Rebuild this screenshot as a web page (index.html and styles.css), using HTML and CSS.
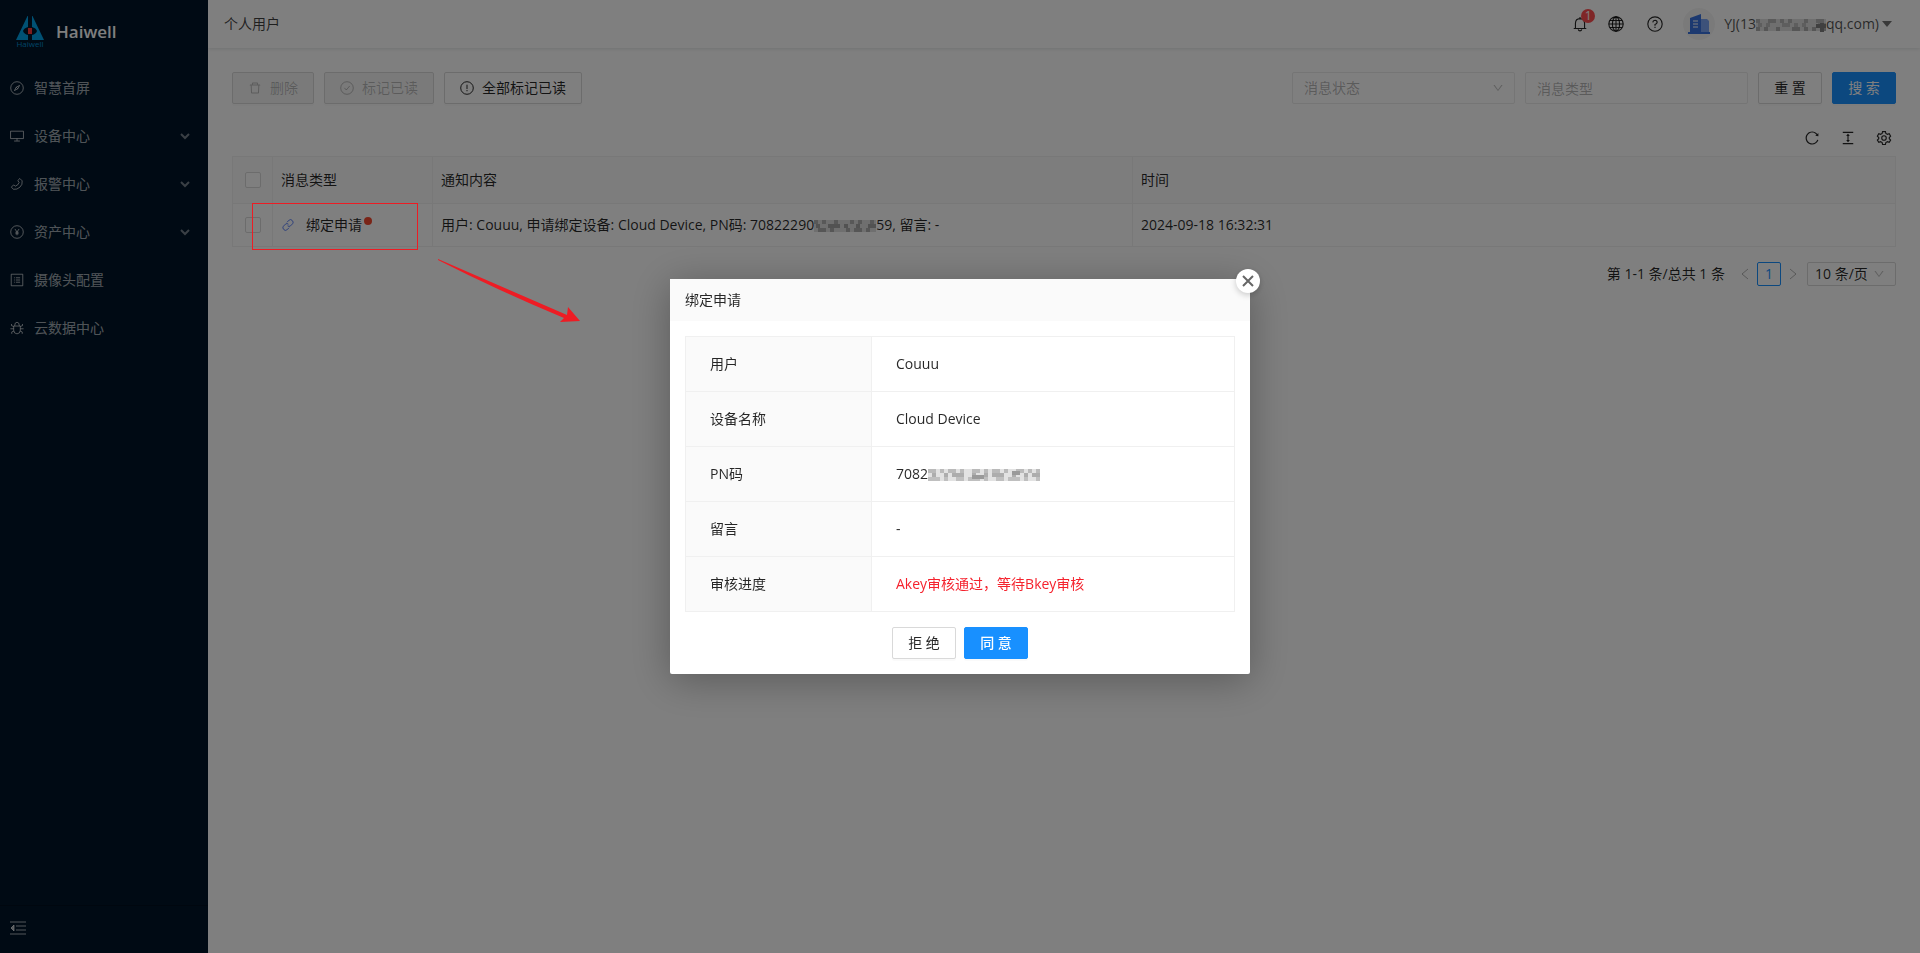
FILE: index.html
```
<!DOCTYPE html>
<html lang="zh-CN">
<head>
<meta charset="utf-8">
<title>Haiwell</title>
<link rel="stylesheet" href="styles.css">
</head>
<body>
<div class="app">
  <aside class="sider">
    <a class="brand" href="#">
      <svg class="brand-logo" viewBox="0 0 28 32" aria-hidden="true">
        <path d="M11.500 0H12V11Q8 12 7 15Q8 18 12 19V24H0Z" fill="#00a2e8"/>
        <path d="M16 0H16.500L28 24H16V19Q20 18 21 15Q20 12 16 11Z" fill="#00a2e8"/>
        <rect x="12" y="12" width="4" height="6" fill="#ff3b3b"/>
        <text class="brand-caption" x="14" y="31" text-anchor="middle" fill="#0088cc">Haiwell</text>
      </svg>
      <span>Haiwell</span>
    </a>
    <nav class="menu">
      <a class="menu-item" href="#"><svg class="icon line" viewBox="0 0 1024 1024"><circle cx="512" cy="512" r="460"/><path d="M700 324 570 570 324 700 454 454ZM454 454 570 570"/></svg><span>智慧首屏</span></a>
      <a class="menu-item" href="#"><svg class="icon line" viewBox="0 0 1024 1024"><path d="M40 160H984V700H40ZM512 700V860M300 880H724"/></svg><span>设备中心</span><svg class="fold" viewBox="0 0 10 10"><path d="M1 3 5 7 9 3"/></svg></a>
      <a class="menu-item" href="#"><svg class="icon line" viewBox="0 0 1024 1024"><path d="M720 110 890 280Q930 560 730 740Q520 940 250 900L100 740 260 580 400 670Q600 600 670 400L570 260Z"/></svg><span>报警中心</span><svg class="fold" viewBox="0 0 10 10"><path d="M1 3 5 7 9 3"/></svg></a>
      <a class="menu-item" href="#"><svg class="icon line" viewBox="0 0 1024 1024"><circle cx="512" cy="512" r="460"/><path d="M360 290 512 510 664 290M512 510V750M390 530H634M390 640H634"/></svg><span>资产中心</span><svg class="fold" viewBox="0 0 10 10"><path d="M1 3 5 7 9 3"/></svg></a>
      <a class="menu-item" href="#"><svg class="icon line" viewBox="0 0 1024 1024"><path d="M90 90H934V934H90ZM290 350H350M290 512H350M290 674H350M430 350H740M430 512H740M430 674H740"/></svg><span>摄像头配置</span></a>
      <a class="menu-item" href="#"><svg class="icon line" viewBox="0 0 1024 1024"><path d="M270 370H754V680Q740 930 512 940Q284 930 270 680ZM340 360Q340 90 512 90Q684 90 684 360M270 400 110 340V220M754 400 914 340V220M270 570H30M754 570H994M290 730 130 800V940M734 730 894 800V940"/></svg><span>云数据中心</span></a>
    </nav>
    <button class="collapse" type="button" aria-label="收起菜单"><svg viewBox="0 0 16 14"><path d="M0 1H16M6 5H16M6 9H16M0 13H16"/><path class="solid" d="M4 4V10L1 7Z"/></svg></button>
  </aside>

  <div class="main">
    <header class="topbar">
      <span class="topbar-title">个人用户</span>
      <div class="topbar-tools">
        <button class="tool bell" type="button" aria-label="通知"><svg class="icon-16 line" viewBox="0 0 1024 1024"><path d="M220 800V460Q230 180 512 170Q794 180 804 460V800M110 800H914M512 170V70M400 850Q420 950 512 950Q604 950 624 850"/></svg><span class="badge">1</span></button>
        <button class="tool globe" type="button" aria-label="语言"><svg class="icon-16 line" viewBox="0 0 1024 1024"><circle cx="512" cy="512" r="460"/><ellipse cx="512" cy="512" rx="230" ry="460"/><path d="M52 512H972M512 52V972M120 290H904M120 734H904"/></svg></button>
        <button class="tool help" type="button" aria-label="帮助"><svg class="icon-16 line" viewBox="0 0 1024 1024"><circle cx="512" cy="512" r="460"/><path d="M370 410Q380 280 512 275Q650 285 650 410Q640 500 512 540V620M512 690V760"/></svg></button>
        <button class="user" type="button">
          <span class="avatar"><svg viewBox="0 0 22 20" aria-hidden="true"><path d="M2 4 13 0V19H2Z" fill="#3873e0"/><path d="M13 5H19L21 7V19H13Z" fill="#7ba5f5"/><path d="M0 18H22V20H0Z" fill="#3873e0"/><path d="M5 7H10M5 10H10M5 13H10" stroke="#fff"/></svg></span>
          <span class="user-name">YJ(13<svg class="mosaic" width="70" height="14" viewBox="0 0 70 14" role="img" aria-label="已隐藏"><path d="M0 7H70" stroke="#dedede" stroke-width="12"/><path d="M0 3H70" stroke="#b4b4b4" stroke-width="4" stroke-dasharray="4 8 8 4 4 4 4 12"/><path d="M2 7H70" stroke="#bdbdbd" stroke-width="4" stroke-dasharray="4 4 4 12 8 4"/><path d="M0 11H70" stroke="#adadad" stroke-width="4" stroke-dasharray="4 4 4 8 4 12 8 4"/><path d="M60 8H70M66 5V14" stroke="#808080" stroke-width="4"/></svg>qq.com)</span>
          <svg class="caret" viewBox="0 0 10 6"><path d="M0 0H10L5 6Z"/></svg>
        </button>
      </div>
    </header>

    <main class="content">
      <div class="filters">
        <div class="group">
          <button class="btn" type="button" disabled><svg class="icon" viewBox="0 0 1024 1024"><path d="M360 184h304v72h72v-80c0-35.300-28.700-64-64-64H352c-35.300 0-64 28.700-64 64v80h72v-72zm504 72H160c-17.700 0-32 14.300-32 32v32c0 4.400 3.600 8 8 8h60.400l24.700 523c1.600 34.100 29.800 61 63.900 61h454c34.200 0 62.300-26.800 63.900-61l24.700-523H888c4.400 0 8-3.600 8-8v-32c0-17.700-14.300-32-32-32zM731.300 840H292.700l-24.200-512h487l-24.200 512z"/></svg>删除</button>
          <button class="btn" type="button" disabled><svg class="icon line" viewBox="0 0 1024 1024"><circle cx="512" cy="512" r="460"/><path d="M320 500 460 660 710 360"/></svg>标记已读</button>
          <button class="btn" type="button"><svg class="icon line" viewBox="0 0 1024 1024"><circle cx="512" cy="512" r="460"/><path d="M512 270V590M512 660V750"/></svg>全部标记已读</button>
        </div>
        <div class="group">
          <label class="field"><select class="control placeholder" aria-label="消息状态"><option>消息状态</option></select><svg class="arrow" viewBox="0 0 1024 1024"><path d="M884 256h-75c-5.100 0-9.900 2.500-12.900 6.600L512 654.200 227.900 262.600c-3-4.100-7.800-6.600-12.900-6.600h-75c-6.500 0-10.300 7.400-6.500 12.700l352.600 486.100c12.800 17.600 39 17.600 51.700 0l352.600-486.100c3.900-5.300.1-12.700-6.400-12.700z"/></svg></label>
          <label class="field"><input class="control" type="text" placeholder="消息类型" aria-label="消息类型"></label>
          <button class="btn" type="button">重 置</button>
          <button class="btn primary" type="button">搜 索</button>
        </div>
      </div>

      <div class="table-tools">
        <button class="tool" type="button" aria-label="刷新"><svg class="icon-16" viewBox="0 0 1024 1024"><path d="M909.100 209.300l-56.400 44.100C775.800 155.100 656.200 92 521.900 92 290 92 102.300 279.500 102 511.500 101.700 743.700 289.800 932 521.900 932c181.300 0 335.800-115 394.600-276.100 1.500-4.200-.7-8.900-4.900-10.300l-56.700-19.500a8 8 0 00-10.100 4.800c-1.800 5-3.800 10-5.900 14.900-17.300 41-42.100 77.800-73.700 109.400A344.770 344.770 0 01655.900 829c-42.300 17.900-87.400 27-133.800 27-46.500 0-91.500-9.100-133.800-27A341.500 341.500 0 01279 755.200a342.160 342.160 0 01-73.700-109.400c-17.900-42.400-27-87.400-27-133.900s9.100-91.500 27-133.900c17.300-41 42.100-77.800 73.700-109.400 31.600-31.600 68.400-56.400 109.300-73.800 42.300-17.900 87.400-27 133.800-27 46.500 0 91.500 9.100 133.800 27a341.500 341.500 0 01109.300 73.800c9.900 9.900 19.200 20.400 27.800 31.400l-60.200 47a8 8 0 003 14.100l175.600 43c5 1.200 9.900-2.600 9.900-7.700l.8-180.900c-.1-6.600-7.800-10.300-13-6.200z"/></svg></button>
        <button class="tool" type="button" aria-label="密度"><svg class="icon-16" viewBox="0 0 1024 1024"><path d="M840 836H184c-4.400 0-8 3.600-8 8v60c0 4.400 3.600 8 8 8h656c4.400 0 8-3.600 8-8v-60c0-4.400-3.600-8-8-8zm0-724H184c-4.400 0-8 3.600-8 8v60c0 4.400 3.600 8 8 8h656c4.400 0 8-3.600 8-8v-60c0-4.400-3.600-8-8-8zM610.800 378c6 0 9.400-7 5.700-11.700L515.700 238.700a7.140 7.140 0 00-11.300 0L403.600 366.300a7.230 7.230 0 005.700 11.700H476v268h-62.800c-6 0-9.400 7-5.700 11.700l100.800 127.500c2.900 3.700 8.500 3.700 11.300 0l100.800-127.500c3.700-4.700.4-11.700-5.700-11.700H548V378h62.800z"/></svg></button>
        <button class="tool" type="button" aria-label="列设置"><svg class="icon-16 line" viewBox="0 0 1024 1024"><path d="M420 100H604L630 220 730 278 846 240 936 398 850 480V560L936 640 846 790 730 750 630 806 604 926H420L394 806 294 750 178 790 88 640 174 560V480L88 398 178 240 294 278 394 220Z"/><circle cx="512" cy="512" r="145"/></svg></button>
      </div>

      <table class="grid">
        <colgroup><col class="col-check"><col class="col-type"><col class="col-text"><col></colgroup>
        <thead><tr><th class="check"><input type="checkbox" aria-label="全选"></th><th>消息类型</th><th>通知内容</th><th>时间</th></tr></thead>
        <tbody><tr>
          <td class="check"><input type="checkbox" aria-label="选择此行"></td>
          <td><a class="message" href="#"><svg class="icon link line" viewBox="0 0 1024 1024"><path d="M440 310 600 150Q710 60 820 180Q950 300 850 420L690 580Q590 660 480 570M584 714 424 874Q314 964 204 844Q74 724 174 604L334 444Q434 364 544 454"/></svg><span class="message-name">绑定申请</span><i class="dot"></i></a></td>
          <td>用户: Couuu, 申请绑定设备: Cloud Device, PN码: 70822290<svg class="mosaic" width="62" height="14" viewBox="0 0 62 14" role="img" aria-label="已隐藏"><path d="M0 7H62" stroke="#dedede" stroke-width="12"/><path d="M0 3H62" stroke="#b0b0b0" stroke-width="4" stroke-dasharray="4 4 4 8 4 12"/><path d="M2 7H62" stroke="#a4a4a4" stroke-width="4" stroke-dasharray="4 8 12 4 4 8"/><path d="M4 11H62" stroke="#adadad" stroke-width="4" stroke-dasharray="8 4 4 12 4 4"/></svg>59, 留言: -</td>
          <td>2024-09-18 16:32:31</td>
        </tr></tbody>
      </table>

      <div class="pager">
        <span class="total">第 1-1 条/总共 1 条</span>
        <button class="step" type="button" disabled aria-label="上一页"><svg viewBox="0 0 10 12"><path d="M8 1 2 6 8 11"/></svg></button>
        <button class="page" type="button">1</button>
        <button class="step" type="button" disabled aria-label="下一页"><svg viewBox="0 0 10 12"><path d="M2 1 8 6 2 11"/></svg></button>
        <label class="size"><select class="control" aria-label="每页条数"><option>10 条/页</option></select><svg class="arrow" viewBox="0 0 1024 1024"><path d="M884 256h-75c-5.100 0-9.900 2.500-12.900 6.600L512 654.200 227.900 262.600c-3-4.100-7.800-6.600-12.900-6.600h-75c-6.500 0-10.300 7.400-6.500 12.700l352.600 486.100c12.800 17.600 39 17.600 51.700 0l352.600-486.100c3.900-5.300.1-12.700-6.400-12.700z"/></svg></label>
      </div>
    </main>
  </div>
</div>

<div class="mask">
  <section class="modal" role="dialog" aria-labelledby="modal-title">
    <h2 class="modal-title" id="modal-title">绑定申请</h2>
    <button class="close" type="button" aria-label="关闭"><svg viewBox="0 0 12 12"><path d="M1 1 11 11M11 1 1 11"/></svg></button>
    <div class="modal-body">
      <table class="details">
        <tbody>
          <tr><th scope="row">用户</th><td>Couuu</td></tr>
          <tr><th scope="row">设备名称</th><td>Cloud Device</td></tr>
          <tr><th scope="row">PN码</th><td>7082<svg class="mosaic" width="112" height="14" viewBox="0 0 112 14" role="img" aria-label="已隐藏"><path d="M0 7H112" stroke="#e2e2e2" stroke-width="12"/><path d="M0 3H112" stroke="#bababa" stroke-width="4" stroke-dasharray="8 4 4 4 8 4 4 8"/><path d="M4 7H112" stroke="#adadad" stroke-width="4" stroke-dasharray="4 8 4 4 12 8"/><path d="M0 11H112" stroke="#bfbfbf" stroke-width="4" stroke-dasharray="12 4 4 8 8 4"/><path d="M44 9H56M84 5H92" stroke="#9a9a9a" stroke-width="4"/></svg></td></tr>
          <tr><th scope="row">留言</th><td>-</td></tr>
          <tr><th scope="row">审核进度</th><td class="alert">Akey审核通过，等待Bkey审核</td></tr>
        </tbody>
      </table>
      <div class="actions">
        <button class="btn" type="button">拒 绝</button>
        <button class="btn primary" type="button">同 意</button>
      </div>
    </div>
  </section>
</div>

<svg class="callout" width="330" height="122" viewBox="0 0 330 122" aria-hidden="true">
  <rect x="0.500" y="0.500" width="165" height="46" fill="none" stroke="#ed1c24"/>
  <path d="M186 56 315 112 316 104 328 118 308 119 312 115Q245 87 186 57Z" fill="#ed1c24"/>
</svg>
</body>
</html>
```
FILE: styles.css
```
* { box-sizing: border-box; }

body {
  margin: 0;
  color: rgba(0, 0, 0, .85);
  font: 14px/22px "Open Sans", "Noto Sans CJK SC", sans-serif;
}

button, input, select { margin: 0; color: inherit; font: inherit; }
button { padding: 0; border: 0; background: none; }
a { color: inherit; text-decoration: none; }
svg { display: block; flex: none; fill: currentColor; }

.line { fill: none; stroke: currentColor; stroke-width: 72; }
.icon { width: 14px; height: 14px; }
.icon-16 { width: 16px; height: 16px; }
.mosaic { display: inline-block; vertical-align: -3px; }

.app { display: flex; min-height: 100vh; background: #fff; }

/* Sidebar */
.sider {
  display: flex;
  flex: none;
  flex-direction: column;
  width: 208px;
  background: #001529;
  color: rgba(255, 255, 255, .65);
}
.brand {
  display: flex;
  align-items: center;
  gap: 12px;
  padding: 16px 16px 12px;
  color: #fff;
  font-size: 17px;
  font-weight: 600;
  line-height: 32px;
}
.brand-logo { width: 28px; height: 32px; }
.brand-caption { font-size: 8px; font-weight: 400; }
.menu { display: flex; flex: 1; flex-direction: column; gap: 8px; padding: 8px 0; }
.menu-item { display: flex; align-items: center; gap: 10px; height: 40px; padding: 0 18px 0 10px; }
.fold { width: 10px; height: 10px; margin-left: auto; fill: none; stroke: currentColor; stroke-width: 2; opacity: .7; }
.collapse { display: flex; align-items: center; height: 48px; padding: 0 10px 4px; border-top: 1px solid rgba(0, 0, 0, .25); }
.collapse svg { width: 16px; height: 14px; fill: none; stroke: currentColor; }
.collapse .solid { fill: currentColor; }

/* Header */
.main { flex: 1; min-width: 0; }
.topbar {
  display: flex;
  align-items: center;
  justify-content: space-between;
  height: 48px;
  padding: 0 28px 0 16px;
  box-shadow: 0 1px 4px rgba(0, 21, 41, .12);
}
.topbar-title { color: rgba(0, 0, 0, .75); }
.topbar-tools { display: flex; align-items: center; }
.tool { display: flex; }
.bell { position: relative; margin-right: 20px; }
.badge {
  position: absolute;
  top: -7px;
  left: 9px;
  width: 14px;
  height: 14px;
  border-radius: 7px;
  background: #ff4d4f;
  color: #fff;
  font-size: 12px;
  line-height: 14px;
}
.globe { margin-right: 23px; }
.help { margin-right: 20px; }
.user { display: flex; align-items: center; color: rgba(0, 0, 0, .7); }
.avatar {
  display: grid;
  place-items: center;
  width: 32px;
  height: 32px;
  margin-right: 9px;
  border-radius: 50%;
  background: #f5f5f5;
}
.avatar svg { width: 22px; height: 20px; }
.caret { width: 10px; height: 6px; margin-left: 3px; color: rgba(0, 0, 0, .55); }

/* Filters */
.content { padding: 24px; }
.filters { display: flex; justify-content: space-between; }
.group { display: flex; gap: 10px; }
.btn {
  display: flex;
  align-items: center;
  justify-content: center;
  gap: 8px;
  min-width: 64px;
  height: 32px;
  padding: 0 15px;
  border: 1px solid #d9d9d9;
  border-radius: 2px;
  background: #fff;
  box-shadow: 0 2px 0 rgba(0, 0, 0, .02);
}
.btn:disabled { background: #f5f5f5; color: rgba(0, 0, 0, .25); }
.primary { border-color: #1890ff; background: #1890ff; color: #fff; }
.field, .size { position: relative; display: block; }
.field { width: 223px; }
.control {
  width: 100%;
  height: 32px;
  padding: 0 11px;
  border: 1px solid #ebebeb;
  border-radius: 2px;
  outline: 0;
  appearance: none;
  background: #fff;
}
.placeholder, .control::placeholder { color: rgba(0, 0, 0, .3); opacity: 1; }
.arrow {
  position: absolute;
  top: 50%;
  right: 11px;
  width: 12px;
  height: 12px;
  margin-top: -6px;
  color: rgba(0, 0, 0, .25);
  pointer-events: none;
}

/* Message table */
.table-tools { display: flex; justify-content: flex-end; gap: 20px; padding: 26px 4px 10px; }
.grid { width: 100%; border-collapse: collapse; table-layout: fixed; }
.col-check { width: 40px; }
.col-type { width: 160px; }
.col-text { width: 700px; }
.grid th, .grid td { padding: 10px 8px; border: 1px solid #f0f0f0; font-weight: 400; text-align: left; }
.grid th { padding: 12px 8px; background: #fafafa; }
.grid .check { padding: 0 12px; }
.grid input {
  display: block;
  width: 16px;
  height: 16px;
  border: 1px solid #d9d9d9;
  border-radius: 2px;
  appearance: none;
  background: #fff;
}
.message { display: flex; align-items: center; }
.link { margin-right: 11px; color: #597ef7; }
.dot { width: 8px; height: 8px; margin: -8px 0 0 2px; border-radius: 50%; background: #f5492f; }

/* Pagination */
.pager { display: flex; align-items: center; justify-content: flex-end; padding-top: 15px; }
.total { margin-right: 8px; }
.step { display: grid; place-items: center; width: 24px; height: 24px; }
.step svg { width: 10px; height: 12px; fill: none; stroke: rgba(0, 0, 0, .3); }
.page { width: 24px; height: 24px; border: 1px solid #1890ff; border-radius: 2px; color: #1890ff; line-height: 22px; }
.size { width: 89px; margin-left: 2px; }
.size .control { height: 24px; padding: 0 7px; border-color: #d9d9d9; }

/* Dialog */
.mask { position: fixed; inset: 0; display: grid; place-items: center; background: rgba(0, 0, 0, .5); }
.modal {
  position: relative;
  width: 580px;
  border-radius: 2px;
  background: #fff;
  box-shadow: 0 6px 40px rgba(0, 0, 0, .3);
}
.modal-title { margin: 0; padding: 10px 15px; background: #fafafa; font-size: 14px; font-weight: 400; line-height: 22px; }
.close {
  position: absolute;
  top: -10px;
  right: -10px;
  display: grid;
  place-items: center;
  width: 24px;
  height: 24px;
  border-radius: 50%;
  background: #fff;
  box-shadow: 0 2px 6px rgba(0, 0, 0, .2);
}
.close svg { width: 12px; height: 12px; fill: none; stroke: #666; stroke-width: 2; }
.modal-body { padding: 15px; }
.details { width: 100%; border-collapse: collapse; table-layout: fixed; }
.details th, .details td { padding: 16px 24px; border: 1px solid #f0f0f0; font-weight: 400; text-align: left; }
.details th { width: 186px; background: #fafafa; }
.details .alert { color: #f5222d; }
.actions { display: flex; justify-content: center; gap: 8px; padding-top: 15px; }
.actions .primary { font-weight: 500; }

/* Highlight drawn over the page */
.callout { position: absolute; top: 203px; left: 252px; pointer-events: none; }
```
